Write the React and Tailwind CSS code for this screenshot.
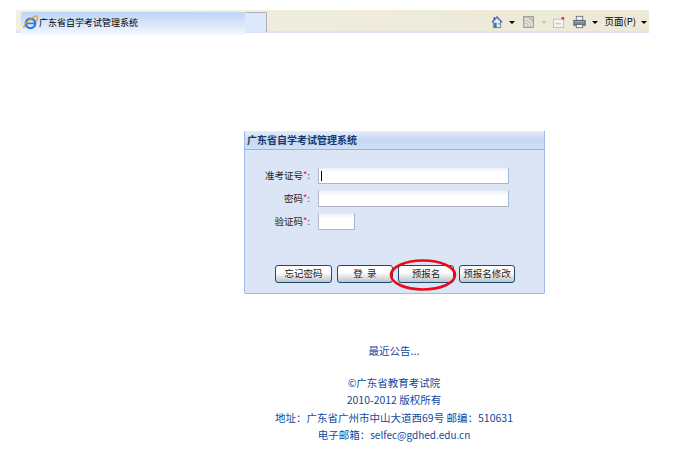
const FONT = 'font-["Noto_Sans_CJK_SC","Liberation_Sans",sans-serif]'

function IeIcon() {
  return (
    <svg width="15" height="15" viewBox="0 0 16 16" className="shrink-0">
      <circle cx="8" cy="9" r="5" fill="none" stroke="#2b7fd6" strokeWidth="2.6" />
      <path d="M4 9h8" stroke="#2b7fd6" strokeWidth="1.8" />
      <path d="M1 14C0 11 7 3 14 1c2 0 2 3 0 6" fill="none" stroke="#e8a020" strokeWidth="1.4" />
    </svg>
  )
}

function Caret({ className = 'border-t-black' }) {
  return <span className={`block w-0 h-0 border-x-[3px] border-x-transparent border-t-[3px] ${className}`} />
}

function HomeIcon() {
  return (
    <svg width="12" height="14" viewBox="0 0 15 16">
      <path d="M7.5 1 1 8h2v7h9V8h2z" fill="#e9eef2" stroke="#4c6a86" />
      <path d="M3 2h2v3H3z" fill="#3a5fc0" />
      <path d="M7.5 1 1 8h2l4.5-5L12 8h2z" fill="#3a66c4" />
      <rect x="4" y="9" width="3" height="6" fill="#3d6e9c" />
      <rect x="8.5" y="9" width="2.5" height="2.5" fill="#8fb7d8" />
    </svg>
  )
}

function FeedIcon() {
  return (
    <svg width="11" height="12" viewBox="0 0 12 13">
      <rect x="0.5" y="0.5" width="11" height="12" fill="#c3c5bf" stroke="#9c9e98" />
      <circle cx="3" cy="10" r="1.2" fill="#f0f0ea" />
      <path d="M2 6a5 5 0 0 1 5 5M2 3a8 8 0 0 1 8 8" fill="none" stroke="#f0f0ea" strokeWidth="1.3" />
    </svg>
  )
}

function MailIcon() {
  return (
    <svg width="12" height="11" viewBox="0 0 14 13">
      <rect x="0.5" y="2.5" width="12" height="10" fill="#f4f4f0" stroke="#b9bbb5" />
      <path d="M3 8h6" stroke="#a9aba5" />
      <rect x="10" y="0" width="3" height="3" fill="#e03040" />
    </svg>
  )
}

function PrintIcon() {
  return (
    <svg width="13" height="14" viewBox="0 0 16 16">
      <rect x="4" y="1" width="8" height="5" fill="#eef0f2" stroke="#5a6670" />
      <rect x="1" y="6" width="14" height="6" fill="#7b8894" stroke="#4a5560" />
      <rect x="4" y="11" width="8" height="4" fill="#f4f4f4" stroke="#5a6670" />
      <rect x="2" y="7" width="12" height="1" fill="#aab6c0" />
    </svg>
  )
}

function Field({ label, width, focused }) {
  return (
    <div className="flex items-center h-[17px]">
      <div className="w-[57px] text-right text-[9.5px] leading-none text-[#222] whitespace-nowrap">
        {label}
        <span className="text-[#e01030]">*</span>
        <span className="text-[#1a4a90]">:</span>
      </div>
      <div
        className={`${width} ml-[8px] h-[17px] pl-[2px] pt-[3px] border border-t-[#e4e8f0] border-l-[#b0b8c8] border-r-[#9db8d8] border-b-[#aeb4c4] bg-gradient-to-b from-[#eef1f6] to-white to-30%`}
      >
        {focused && <div className="w-px h-[10px] bg-black" />}
      </div>
    </div>
  )
}

function Btn({ children, width }) {
  return (
    <button
      className={`${width} h-[18px] rounded-[3px] border border-[#1c4a70] bg-gradient-to-b from-white from-40% to-[#bfc3c8] text-[9.5px] leading-none text-[#222] whitespace-nowrap`}
    >
      {children}
    </button>
  )
}

export default function App() {
  return (
    <div className={`${FONT} w-[690px] h-[451px] bg-white overflow-hidden pt-[10px]`}>
      {/* IE tab strip */}
      <div className="ml-[16px] w-[633px] h-[23px] flex items-start pt-[2px] pl-[5px] bg-gradient-to-r from-[#f1efe2] to-[#ece9d8] border-b-2 border-b-[#dbe4f4]">
        <div className="w-[224px] h-[23px] flex items-center gap-[1px] pl-[2px] pb-[3px] rounded-t-[2px] bg-gradient-to-b from-[#bcd4f6] to-[#f4f8fe] text-[9px] leading-none text-black">
          <IeIcon />
          <span>广东省自学考试管理系统</span>
        </div>
        <div className="w-[22px] h-[20px] rounded-t-[2px] border border-[#a8b0bc] border-b-0 border-l-0 bg-[#dde8fa]" />
        <div className="ml-auto flex items-center h-[20px] pr-[2px] text-[9.5px] leading-none text-black">
          <HomeIcon />
          <span className="ml-[6px]"><Caret /></span>
          <span className="ml-[8px]"><FeedIcon /></span>
          <span className="ml-[7px]"><Caret className="border-t-[#c8c8c0]" /></span>
          <span className="ml-[6px]"><MailIcon /></span>
          <span className="ml-[8px]"><PrintIcon /></span>
          <span className="ml-[6px]"><Caret /></span>
          <span className="ml-[7px] whitespace-nowrap">页面(P)</span>
          <span className="ml-[5px]"><Caret /></span>
        </div>
      </div>

      {/* login panel */}
      <div className="ml-[244px] mt-[98px] w-[301px] h-[163px] border border-t-0 border-[#9dbbe4] rounded-b-[2px] bg-[#dbe5f6]">
        <div className="h-[19px] flex items-center pl-[2px] border-b border-[#94b4e2] bg-gradient-to-b from-[#e6edf8] via-[#c6d8f2] to-[#cfdff6] text-[10px] font-bold leading-none text-[#15376e]">
          广东省自学考试管理系统
        </div>
        <div className="pt-[17px] pl-[8px] flex flex-col gap-[6px]">
          <Field label="准考证号" width="w-[191px]" focused />
          <Field label="密码" width="w-[191px]" />
          <Field label="验证码" width="w-[37px]" />
        </div>
        <div className="relative mt-[35px] ml-[30px] flex gap-[5px]">
          <Btn width="w-[57px]">忘记密码</Btn>
          <Btn width="w-[56px]">登&nbsp;&nbsp;录</Btn>
          <Btn width="w-[56px]">预报名</Btn>
          <Btn width="w-[56px]">预报名修改</Btn>
          <svg width="68" height="34" viewBox="0 0 68 34" className="absolute left-[114px] top-[-7px]">
            <ellipse cx="34" cy="17" rx="32" ry="14.5" fill="none" stroke="#ea0b16" strokeWidth="2.6" />
          </svg>
        </div>
      </div>

      {/* footer */}
      <div className="ml-[244px] w-[300px] mt-[48px] text-center text-[10.5px] leading-[17.5px] text-[#0f4aa0] whitespace-nowrap flex flex-col items-center">
        <div>最近公告...</div>
        <div className="h-[14px]" />
        <div>©广东省教育考试院</div>
        <div>2010-2012 版权所有</div>
        <div>{'地址\uFF1A广东省广州市中山大道西69号 邮编\uFF1A510631'}</div>
        <div>{'电子邮箱\uFF1A'}<span className="text-[10px]">selfec@gdhed.edu.cn</span></div>
      </div>
    </div>
  )
}
